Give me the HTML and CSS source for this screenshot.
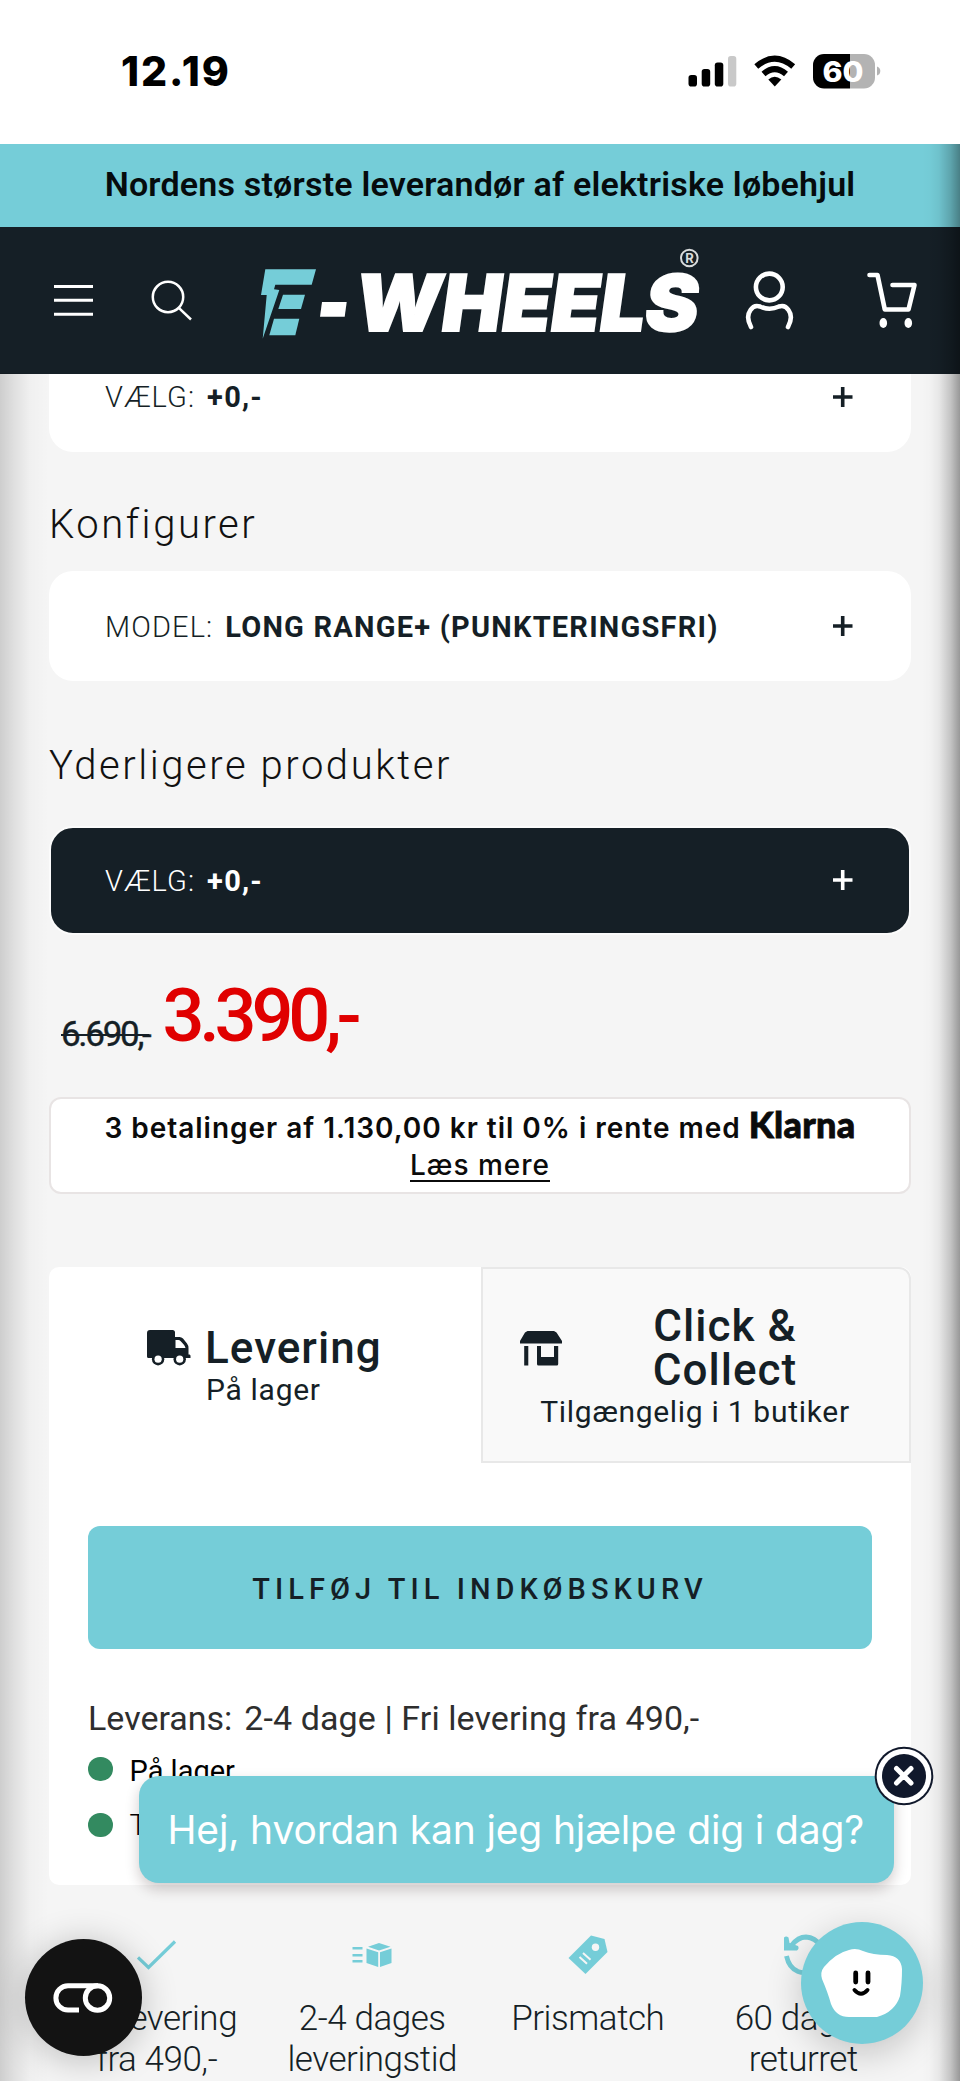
FILE: index.html
```html
<!DOCTYPE html>
<html lang="da">
<head>
<meta charset="utf-8">
<title>E-Wheels</title>
<link rel="stylesheet" href="styles.css">
</head>
<body>
<div class="screen">
  <div class="status">
    <span class="time">12.19</span>
    <svg class="status-icons" width="200" height="44" viewBox="680 50 200 44">
      <rect x="688.5" y="75" width="8.5" height="11.5" rx="2.8"/>
      <rect x="701.7" y="69" width="8.5" height="17.5" rx="2.8"/>
      <rect x="714.8" y="62.5" width="8.5" height="24" rx="2.8"/>
      <rect x="728" y="56" width="8.3" height="30.5" rx="2.8" fill="#c9c9c9"/>
      <g fill="none" stroke="#000" stroke-width="6">
        <path d="M756.3 66.5Q774.7 50.8 793.2 66.5"/>
        <path d="M763.5 74Q774.7 64.2 786 74"/>
      </g>
      <path d="M768.3 79.5Q774.7 74 781.3 79.5L774.8 86.5Z"/>
      <clipPath id="batt"><rect x="813" y="54" width="62" height="34.5" rx="11"/></clipPath>
      <g clip-path="url(#batt)"><rect x="813" y="54" width="37" height="35"/><rect x="850" y="54" width="25" height="35" fill="#b3b3b3"/></g>
      <path d="M877 66.5Q880.3 67.5 880.3 71Q880.3 74.5 877 75.5Z" fill="#b3b3b3"/>
      <text class="batt-text" x="822.5" y="81.5" textLength="41" lengthAdjust="spacingAndGlyphs">60</text>
    </svg>
  </div>

  <div class="promo">Nordens største leverandør af elektriske løbehjul</div>

  <header class="header">
    <svg class="menu" width="40" height="36" viewBox="0 0 40 36"><path d="M0 4.5H39M0 18.3H39M0 32.3H39"/></svg>
    <svg class="search" width="42" height="42" viewBox="0 0 42 42"><circle cx="17" cy="17" r="15.2"/><path d="M27.8 27.8L40 39.5"/></svg>
    <svg class="logo" width="450" height="100" viewBox="255 245 450 100">
      <g fill="#75cdd8">
        <path d="M265.3 269.3H316L311.7 284.7H275.3L274 289.3L279.3 290L262.7 338.7L266.7 295H261Z"/>
        <path d="M283 294.7H305L301 309H278.3Z"/>
        <path d="M274 318.7H299.3L295.3 335.3H269.3Z"/>
      </g>
      <path d="M322 302H346.7L344.7 316.7H320Z" fill="#fff"/>
      <g transform="translate(0 331) skewX(-8)"><text class="wordmark" x="352.5" y="0" textLength="343" lengthAdjust="spacingAndGlyphs">WHEELS</text></g>
      <circle cx="689.3" cy="258" r="8.3" fill="none" stroke="#d8dbdc" stroke-width="2"/>
      <text class="reg" x="689.5" y="262.8" text-anchor="middle">R</text>
    </svg>
    <svg class="user" width="50" height="60" viewBox="744 270 50 60"><circle cx="769.3" cy="287" r="13.4"/><path d="M751 327Q745.5 317 750.5 310Q754 304.5 760 306.5Q769.5 311 779 306.5Q785 304.5 788.5 310Q793.5 317 788 327"/></svg>
    <svg class="cart" width="54" height="60" viewBox="865 270 54 60"><path d="M869.5 275H877.5L884.8 309.5H908.5L914.5 285H892.5"/><ellipse cx="883.3" cy="323" rx="3.8" ry="5"/><ellipse cx="908.3" cy="323" rx="3.8" ry="5"/></svg>
  </header>

  <main class="main">
    <div class="option option-cut"><span class="opt-label">VÆLG:</span><b class="opt-value">+0,-</b><svg class="plus" width="20" height="20" viewBox="0 0 20 20"><path d="M0 10H19.5M9.7 0V20"/></svg></div>
    <h2 class="heading heading-first">Konfigurer</h2>
    <div class="option option-model"><span class="opt-label">MODEL:</span><b class="opt-value">LONG RANGE+ (PUNKTERINGSFRI)</b><svg class="plus" width="20" height="20" viewBox="0 0 20 20"><path d="M0 10H19.5M9.7 0V20"/></svg></div>
    <h2 class="heading heading-second">Yderligere produkter</h2>
    <div class="option option-dark"><span class="opt-label">VÆLG:</span><b class="opt-value">+0,-</b><svg class="plus" width="20" height="20" viewBox="0 0 20 20"><path d="M0 10H19.5M9.7 0V20"/></svg></div>

    <div class="prices"><span class="old">6.690,-</span><span class="new">3.390,-</span></div>

    <div class="klarna">
      <div class="klarna-line">3 betalinger af 1.130,00 kr til 0% i rente med <span class="klarna-logo">Klarna</span></div>
      <a class="klarna-more">Læs mere</a>
    </div>

    <section class="delivery">
      <div class="tabs">
        <div class="tab tab-active">
          <svg class="truck" width="44" height="36" viewBox="0 0 44 36">
            <path fill-rule="evenodd" d="M3 0H25.500Q28 0 28 2.500V7H32.500Q34.500 7 36 8.600L40 13.500Q41.500 15.500 41.500 18V24.500H42.500Q43.500 24.500 43.500 26V28H1.500Q0 28 0 26.500V3Q0 0 3 0ZM28.500 10V18H38.500Q38 16 36.500 14.300L33.500 11Q32.500 10 31.500 10Z"/>
            <circle cx="11.100" cy="29.200" r="6.200"/><circle cx="32.700" cy="29.200" r="6.200"/>
            <g fill="#fff"><circle cx="11.100" cy="29.200" r="3.600"/><circle cx="32.700" cy="29.200" r="3.600"/></g>
          </svg>
          <div class="tab-body"><div class="tab-title">Levering</div><div class="tab-sub">På lager</div></div>
        </div>
        <div class="tab tab-collect">
          <div class="collect-row">
            <svg class="shop" width="43" height="35" viewBox="0 0 43 35"><path d="M7.500 0H34L36.500 1.500L42 10V12.500H0V10L5 1.500ZM4.200 15H8.300V34.500H4.200ZM17 15H21V26H34V15H38.200V33Q38.200 34.500 36.700 34.500H18.500Q17 34.500 17 33Z"/></svg>
            <div class="tab-title">Click &amp;<br>Collect</div>
          </div>
          <div class="tab-sub">Tilgængelig i 1 butiker</div>
        </div>
      </div>
      <div class="buy">TILFØJ TIL INDKØBSKURV</div>
      <div class="leverans"><span>Leverans:</span><span class="lev-value">2-4 dage | Fri levering fra 490,-</span></div>
      <div class="stock"><i class="dot"></i><span class="stock-text">På lager</span></div>
      <div class="stock stock-second"><i class="dot"></i><span class="stock-text">Tilgængelig</span></div>
    </section>

    <section class="features">
      <div class="feature">
        <svg width="40" height="41" viewBox="137 1934 40 41"><path d="M138 1957.500L148.500 1967.500L175 1941.500" fill="none" stroke="#75cdd8" stroke-width="3.200"/></svg>
        <p>Fri levering<br>fra 490,-</p>
      </div>
      <div class="feature">
        <svg width="40" height="41" viewBox="351.500 1934 40 41"><g fill="#75cdd8"><path d="M352 1947H362V1949.500H352ZM352 1954H362V1956.500H352ZM352 1960H362V1962.500H352ZM378.500 1943L390 1946.700L378.500 1950.500L367.500 1946.700Z"/><path d="M366 1948.500L377.700 1952.300V1967L366 1963ZM379.500 1952.300L391 1948.500V1963L379.500 1967Z"/></g></svg>
        <p>2-4 dages<br>leveringstid</p>
      </div>
      <div class="feature">
        <svg width="40" height="41" viewBox="568.500 1934 40 41"><path d="M569 1958L591.500 1935.500L605 1939L608 1952L586 1974Z" fill="#75cdd8"/><circle cx="596" cy="1947.300" r="3.700" fill="#f5f5f5"/><path d="M583.500 1953L591 1959.800M580 1957L587.500 1963.800" stroke="#f5f5f5" stroke-width="2"/></svg>
        <p>Prismatch</p>
      </div>
      <div class="feature">
        <svg width="40" height="41" viewBox="783 1934 40 41"><g fill="none" stroke="#75cdd8" stroke-width="4.800"><path d="M786.500 1956Q789 1968 798 1971.500Q808 1975 816 1967"/><path d="M791.500 1945.500Q798 1937 806 1937Q815 1937.500 821 1946"/></g><path d="M784 1937.500Q786 1935.500 788.500 1937.500L789.500 1943L798 1946Q799.500 1948.500 797 1950.500H784Z" fill="#75cdd8"/></svg>
        <p>60 dages<br>returret</p>
      </div>
    </section>
  </main>

  <div class="edge edge-left"></div>
  <div class="edge edge-right"></div>

  <div class="bubble">Hej, hvordan kan jeg hjælpe dig i dag?</div>
  <svg class="close" width="60" height="60" viewBox="0 0 60 60"><circle cx="30" cy="30" r="29.300" fill="#10182b"/><circle cx="30" cy="30" r="27.300" fill="#fff"/><circle cx="30" cy="30" r="22" fill="#10182b"/><path d="M22.500 22.500L37 37M37 22.500L22.500 37" stroke="#fff" stroke-width="5" stroke-linecap="round"/></svg>
  <div class="consent">
    <svg width="60" height="30" viewBox="0 0 60 30"><g fill="none" stroke="#fff" stroke-width="5"><path d="M26 27H15A12 12 0 0 1 15 2.800H45"/><circle cx="44.500" cy="15" r="12.200"/></g></svg>
  </div>
  <div class="chat">
    <svg width="122" height="122" viewBox="801 1922 122 122">
      <path d="M824 1967Q836 1953 849 1950Q856 1947.500 863 1951Q873 1955 887 1955Q901 1956 902 1969Q902 1984 900 1996Q895 2012 877 2017H849Q836 2017 831 2004Q828 1993 822 1979Q820 1972 824 1967Z" fill="#fff"/>
      <g fill="none" stroke="#000" stroke-linecap="round"><path d="M855.700 1973V1982M868 1973V1982" stroke-width="4.800"/><path d="M854.500 1990Q861 1997.500 867.500 1990" stroke-width="4"/></g>
    </svg>
  </div>
</div>
</body>
</html>
```
FILE: styles.css
```css
* { box-sizing: border-box; }
body { margin: 0; font-family: Roboto, sans-serif; color: #151f26; background: #f5f5f5; }
svg { display: block; flex: none; }
p, h2 { margin: 0; }

.screen { position: relative; width: 960px; height: 2081px; overflow: hidden; background: #f5f5f5; }

.status { height: 144px; padding: 0 80px 0 121px; background: #fff; display: flex; justify-content: space-between; align-items: flex-start; }
.time { font: 800 41px/143px Inter, sans-serif; letter-spacing: 1.9px; color: #000; }
.status-icons { margin-top: 50px; overflow: visible; }
.batt-text { font: 800 28px Inter, sans-serif; fill: #fff; }

.promo { height: 83px; background: #75cdd8; color: #060b0d; text-align: center; font-size: 34px; font-weight: 600; line-height: 80px; letter-spacing: .2px; }

.header { height: 147px; margin-bottom: -1px; background: #151f26; display: flex; align-items: flex-start; padding-left: 54px; position: relative; }
.menu { margin-top: 55px; stroke: #fff; stroke-width: 3; }
.search { margin: 53px 0 0 57px; fill: none; stroke: #fff; stroke-width: 2.5; }
.logo { margin: 18px 0 0 62px; overflow: visible; }
.wordmark { font: 900 78px Inter, sans-serif; fill: #fff; stroke: #fff; stroke-width: 2px; }
.reg { font: 700 13px Inter, sans-serif; fill: #d8dbdc; }
.user { margin: 43px 0 0 39px; fill: none; stroke: #fff; stroke-width: 4.6; stroke-linecap: round; }
.cart { margin: 43px 0 0 71px; }
.cart path { fill: none; stroke: #fff; stroke-width: 4.6; stroke-linecap: round; stroke-linejoin: round; }
.cart ellipse { fill: #fff; }

.main { padding: 0 49px; }

.option { display: flex; align-items: center; height: 110px; padding: 2px 58px 0 56px; background: #fff; border-radius: 24px; font-size: 29px; line-height: 48px; }
.opt-label { font-weight: 300; letter-spacing: 1.1px; margin-right: 12px; }
.opt-value { font-weight: 700; letter-spacing: 1.22px; }
.plus { margin-left: auto; stroke: currentColor; stroke-width: 3.6; }
.option-cut { height: 79px; border-radius: 0 0 24px 24px; padding-top: 0; padding-bottom: 31px; }
.option-cut .plus { margin-top: -1px; }
.option-model .plus { margin-top: -3px; }
.option-dark { height: 109px; background: #151f26; color: #fff; border: 2px solid #fbfbfb; padding: 0 56px 0 54px; }
.option-dark .plus { margin-top: -1px; }

.heading { font-size: 40px; font-weight: 300; line-height: 48px; color: #111; letter-spacing: 2.55px; }
.heading-first { margin: 49px 0 22px; }
.heading-second { margin: 61px 0 36px; }

.prices { display: flex; align-items: flex-start; height: 80px; margin-top: 41px; padding-left: 12px; }
.old { margin-top: 39px; font-size: 35px; font-weight: 400; line-height: 40px; letter-spacing: -2.3px; text-decoration: line-through; text-decoration-thickness: 2px; -webkit-text-stroke: .4px #151f26; }
.new { margin-left: 13px; font-size: 74px; font-weight: 500; line-height: 80px; letter-spacing: -5.2px; color: #e00000; }

.klarna { height: 97px; margin-top: 41px; padding-top: 10px; background: #fff; border: 2px solid #e8e4e4; border-radius: 12px; text-align: center; font: 600 28px/37px Inter, sans-serif; letter-spacing: .98px; color: #0b0b0b; white-space: nowrap; }
.klarna-line { height: 38px; }
.klarna-logo { font: 900 36px/30px Lato, sans-serif; letter-spacing: .3px; -webkit-text-stroke: .8px #0b0b0b; }
.klarna-more { display: inline-block; height: 35px; border-bottom: 2.5px solid #0b0b0b; font-weight: 500; }

.delivery { height: 618px; margin-top: 73px; background: #fff; border-radius: 10px; }
.tabs { display: grid; grid-template-columns: 432px 430px; height: 196px; }
.tab-active { display: flex; padding: 59px 0 0 98px; }
.truck { margin-top: 4px; fill: #151f26; }
.shop { fill: #151f26; }
.tab-body { margin-left: 14px; }
.tab-title { font-size: 44px; font-weight: 500; line-height: 44px; letter-spacing: 1.05px; }
.tab-sub { padding-top: 1px; font-size: 30px; line-height: 38px; letter-spacing: .7px; }
.tab-active .tab-sub { margin-left: 1px; }
.tab-collect { padding-top: 35px; background: #f9f9f9; border: 2px solid #e8e8e8; border-radius: 0 12px 0 0; text-align: center; }
.tab-collect .tab-sub { padding-right: 2px; }
.collect-row { display: flex; align-items: center; padding-left: 37px; }
.collect-row .tab-title { flex: 1; padding-left: 14px; padding-right: 36px; }

.buy { height: 123px; margin: 63px 39px 0; padding-top: 1px; background: #75cdd8; border-radius: 12px; text-align: center; font-size: 29px; font-weight: 500; line-height: 124px; letter-spacing: 5.05px; }
.leverans { display: flex; margin: 49px 0 0 39px; font-size: 34px; line-height: 40px; color: #2e2e2e; }
.lev-value { margin-left: 12px; letter-spacing: .09px; }
.stock { display: flex; align-items: center; height: 56px; margin: 3px 0 0 39px; font-size: 29px; color: #000; }
.dot { width: 24.5px; height: 24.5px; border-radius: 50%; background: #338a60; margin-right: 17px; }
.stock-text { padding-top: 4px; }
.stock-second { margin-top: 0; }
.stock-second .stock-text { font-weight: 300; padding-top: 0; }

.features { display: grid; grid-template-columns: repeat(4, 1fr); margin-top: 49px; }
.feature { display: flex; flex-direction: column; align-items: center; text-align: center; font-size: 35px; font-weight: 300; line-height: 41px; letter-spacing: -.45px; white-space: nowrap; }
.feature p { margin-top: 23px; }

.edge { position: absolute; top: 373px; bottom: 0; width: 49px; }
.edge-left { left: 0; background: linear-gradient(to right, rgba(0,0,0,.16), rgba(0,0,0,.09) 28%, rgba(0,0,0,.02) 62%, rgba(0,0,0,0)); }
.edge-right { top: 144px; right: 0; width: 38px; background: linear-gradient(to left, rgba(0,0,0,.38), rgba(0,0,0,.2) 25%, rgba(0,0,0,.06) 55%, rgba(0,0,0,.01) 80%, rgba(0,0,0,0)); }

.bubble { position: absolute; left: 138.5px; top: 1776px; width: 755.5px; height: 107px; padding-left: 29px; background: #75cdd8; color: #fff; border-radius: 20px; box-shadow: 0 6px 14px rgba(40,20,20,.22); font: 400 39px/107px Inter, sans-serif; letter-spacing: -.15px; white-space: nowrap; }
.close { position: absolute; left: 873.5px; top: 1745.5px; }
.consent { position: absolute; left: 24.5px; top: 1939px; width: 117px; height: 117px; border-radius: 50%; background: #131313; display: flex; align-items: center; justify-content: center; box-shadow: 0 4px 36px rgba(0,0,0,.24); }
.chat { position: absolute; left: 801px; top: 1922px; width: 122px; height: 122px; border-radius: 50%; background: #75cdd8; box-shadow: 0 10px 36px rgba(0,0,0,.2); }
```
